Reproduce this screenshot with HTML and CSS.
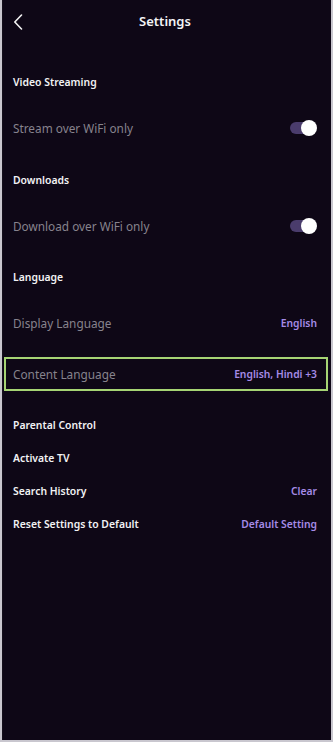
FILE: index.html
```html
<!DOCTYPE html>
<html>
<head>
<meta charset="utf-8">
<link rel="stylesheet" href="styles.css">
</head>
<body>
<div class="screen">
  <header class="topbar">
    <svg class="back" width="10" height="16" viewBox="0 0 10 16"><path d="M8.5 1 L1.8 8 L8.5 15" fill="none" stroke="#f2f2f2" stroke-width="1.6" stroke-linecap="round" stroke-linejoin="round"/></svg>
    <h1 class="title">Settings</h1>
  </header>

  <div class="section first">Video Streaming</div>
  <div class="row">
    <span class="label">Stream over WiFi only</span>
    <span class="toggle"><span class="knob"></span></span>
  </div>

  <div class="section">Downloads</div>
  <div class="row">
    <span class="label">Download over WiFi only</span>
    <span class="toggle"><span class="knob"></span></span>
  </div>

  <div class="section">Language</div>
  <div class="row">
    <span class="label">Display Language</span>
    <span class="value">English</span>
  </div>
  <div class="row focused">
    <span class="label">Content Language</span>
    <span class="value">English, Hindi +3</span>
  </div>

  <div class="list">
    <div class="item"><span class="item-label">Parental Control</span></div>
    <div class="item"><span class="item-label">Activate TV</span></div>
    <div class="item"><span class="item-label">Search History</span><span class="value">Clear</span></div>
    <div class="item"><span class="item-label">Reset Settings to Default</span><span class="value">Default Setting</span></div>
  </div>
</div>
</body>
</html>
```

FILE: styles.css
```css
html, body {
  margin: 0;
  padding: 0;
  background: #c9c7cf;
}
body {
  width: 333px;
  height: 742px;
  font-family: "Noto Sans", "Open Sans", sans-serif;
}
.screen {
  width: 329px;
  height: 740px;
  margin-left: 2px;
  background: #0e0716;
  box-sizing: border-box;
  padding: 0 14px 0 10px;
  display: flex;
  flex-direction: column;
  border-left: 1px solid #15101c;
}
.topbar {
  height: 42px;
  display: flex;
  align-items: center;
  justify-content: center;
  position: relative;
}
.back {
  position: absolute;
  left: 0;
  top: 14px;
}
.title {
  margin: 0;
  font-size: 13px;
  font-weight: 600;
  color: #f4f4f6;
}
.section {
  font-size: 10.4px;
  font-weight: 600;
  color: #f2f2f4;
  height: 16px;
  line-height: 16px;
  margin-top: 26.5px;
}
.section.first {
  margin-top: 32px;
}
.row {
  height: 34px;
  margin-top: 21px;
  display: flex;
  align-items: center;
  justify-content: space-between;
  box-sizing: border-box;
}
.label {
  font-size: 11.8px;
  color: #87838d;
}
.value {
  font-size: 10.3px;
  font-weight: 600;
  color: #a58be6;
}
.toggle {
  width: 26px;
  height: 12px;
  border-radius: 6px;
  background: #4a3c6c;
  position: relative;
  margin-right: 1px;
}
.knob {
  position: absolute;
  right: -1px;
  top: -2px;
  width: 16px;
  height: 16px;
  border-radius: 50%;
  background: #ffffff;
}
.focused {
  margin-left: -9px;
  margin-right: -11px;
  padding: 0 9px 0 7px;
  border: 2px solid #a6d474;
  margin-top: 17px;
}
.list {
  margin-top: 26px;
  display: flex;
  flex-direction: column;
  gap: 17px;
}
.item {
  height: 16px;
  display: flex;
  align-items: center;
  justify-content: space-between;
}
.item-label {
  font-size: 10.4px;
  font-weight: 600;
  color: #f2f2f4;
}
```
